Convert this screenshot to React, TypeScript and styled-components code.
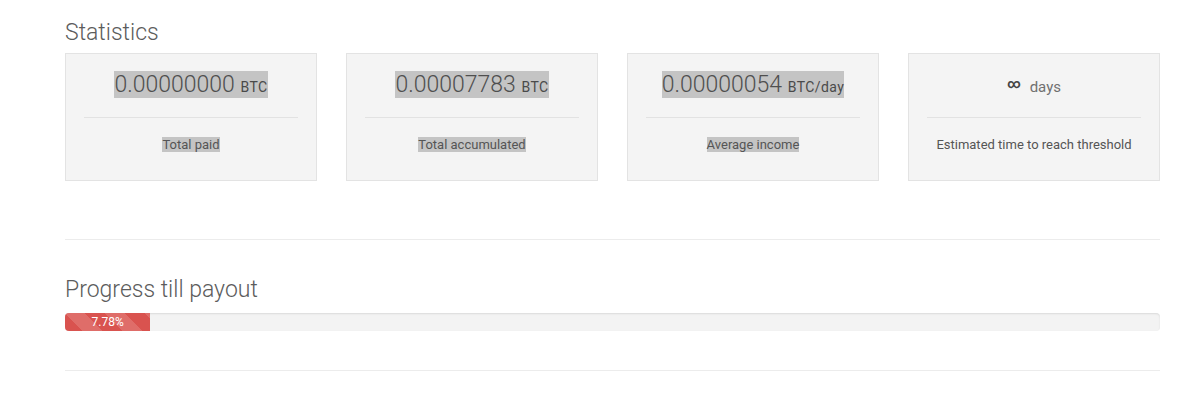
import React from "react";
import styled, { createGlobalStyle } from "styled-components";

const GlobalStyle = createGlobalStyle`
  body {
    margin: 0;
    background: #fff;
    font-family: Roboto, "Liberation Sans", sans-serif;
    color: #555;
  }
`;

type Stat = {
  value: string;
  unit: string;
  label: string;
  selected?: boolean;
  infinite?: boolean;
};

const stats: Stat[] = [
  { value: "0.00000000", unit: "BTC", label: "Total paid", selected: true },
  { value: "0.00007783", unit: "BTC", label: "Total accumulated", selected: true },
  { value: "0.00000054", unit: "BTC/day", label: "Average income", selected: true },
  { value: "∞", unit: "days", label: "Estimated time to reach threshold", infinite: true },
];

const progress = 7.78;

export default function App() {
  return (
    <Page>
      <GlobalStyle />
      <Section>
        <Heading>Statistics</Heading>
        <CardRow>
          {stats.map((s) => (
            <Card key={s.label}>
              <ValueLine>
                {s.infinite ? (
                  <>
                    <Infinity>∞</Infinity>
                    <Days>days</Days>
                  </>
                ) : (
                  <Mark $on={s.selected}>
                    <Amount>{s.value}</Amount> <Unit>{s.unit}</Unit>
                  </Mark>
                )}
              </ValueLine>
              <Divider />
              <Label>
                <Mark $on={s.selected}>{s.label}</Mark>
              </Label>
            </Card>
          ))}
        </CardRow>
      </Section>
      <Rule $top={58} $bottom={36} />
      <Section>
        <Heading>Progress till payout</Heading>
        <Track>
          <Fill style={{ width: `${progress}%` }}>{progress}%</Fill>
        </Track>
      </Section>
      <Rule $top={39} $bottom={0} />
    </Page>
  );
}

const Page = styled.div`
  padding: 19px 40px 0 65px;
`;

const Section = styled.section`
  display: flex;
  flex-direction: column;
`;

const Heading = styled.h3`
  margin: 0 0 7px;
  font-size: 23px;
  font-weight: 300;
  line-height: 28px;
  color: #5c5c5c;
`;

const CardRow = styled.div`
  display: flex;
  gap: 29px;
  margin-top: -1px;
`;

const Card = styled.div`
  flex: 1;
  box-sizing: border-box;
  height: 128px;
  padding: 18px 18px 0;
  background: #f4f4f4;
  border: 1px solid #e3e3e3;
  text-align: center;
`;

const ValueLine = styled.div`
  height: 26px;
  font-size: 23px;
  line-height: 26px;
  white-space: nowrap;
`;

const Mark = styled.span<{ $on?: boolean }>`
  background: ${(p) => (p.$on ? "#c4c4c4" : "transparent")};
`;

const Amount = styled.span`
  font-size: 23px;
  font-weight: 300;
  color: #4f4f4f;
`;

const Unit = styled.span`
  font-size: 14px;
  font-weight: 400;
  letter-spacing: 0.4px;
  color: #4a4a4a;
`;

const Infinity = styled.span`
  font-size: 13px;
  font-weight: 700;
  color: #444;
  margin-right: 9px;
  position: relative;
  top: -4px;
`;

const Days = styled.span`
  font-size: 15px;
  color: #707070;
`;

const Divider = styled.div`
  margin-top: 19px;
  border-top: 1px solid #e2e2e2;
`;

const Label = styled.div`
  margin-top: 19px;
  font-size: 13px;
  line-height: 15px;
  color: #555;
`;

const Rule = styled.hr<{ $top: number; $bottom: number }>`
  margin: ${(p) => p.$top}px 0 ${(p) => p.$bottom}px;
  border: 0;
  border-top: 1px solid #ececec;
`;

const Track = styled.div`
  height: 18px;
  margin-top: 2px;
  background: #f3f3f3;
  border-radius: 4px;
  box-shadow: inset 0 1px 2px rgba(0, 0, 0, 0.1);
  overflow: hidden;
  display: flex;
`;

const Fill = styled.div`
  height: 100%;
  background-color: #d9534f;
  background-image: linear-gradient(
    45deg,
    rgba(255, 255, 255, 0.15) 25%,
    transparent 25%,
    transparent 50%,
    rgba(255, 255, 255, 0.15) 50%,
    rgba(255, 255, 255, 0.15) 75%,
    transparent 75%,
    transparent
  );
  background-size: 40px 40px;
  color: #fff;
  font-size: 12px;
  line-height: 18px;
  text-align: center;
`;
